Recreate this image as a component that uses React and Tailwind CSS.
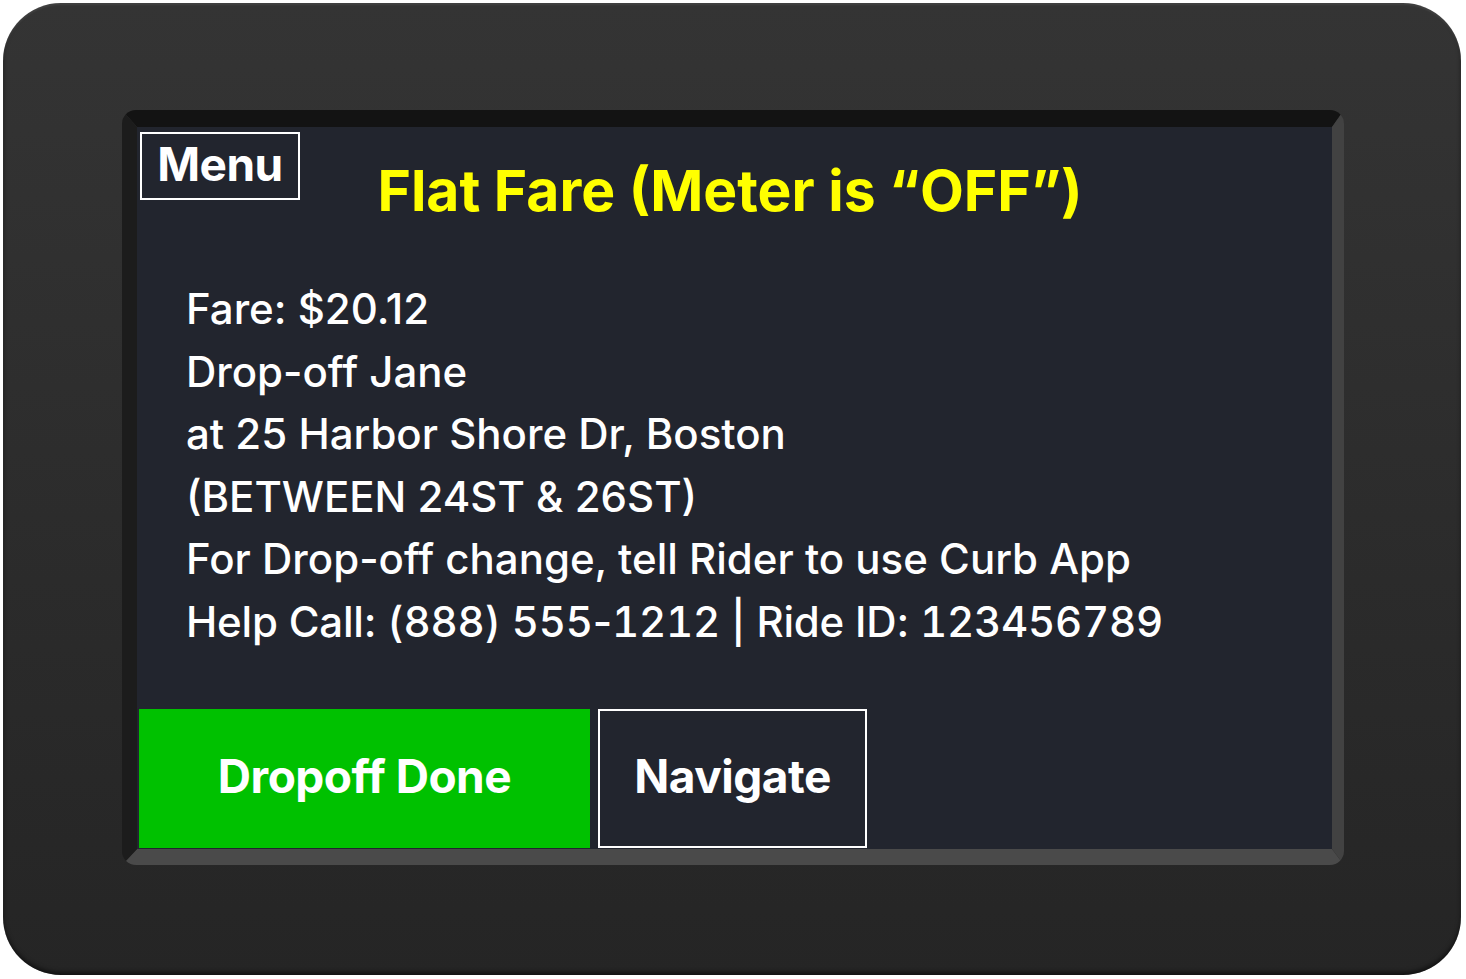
import React from 'react';

const lines = [
  'Fare: $20.12',
  'Drop-off Jane',
  'at 25 Harbor Shore Dr, Boston',
  '(BETWEEN 24ST & 26ST)',
  'For Drop-off change, tell Rider to use Curb App',
];

export default function App() {
  return (
    <div className="min-h-screen bg-white p-[3px]" style={{ fontFamily: 'Inter, "Noto Sans", sans-serif' }}>
      {/* Device frame */}
      <div className="w-[1458px] h-[972px] rounded-[58px] bg-gradient-to-b from-[#343434] to-[#252525] shadow-[inset_0_2px_2px_rgba(255,255,255,0.08),inset_0_-3px_4px_rgba(0,0,0,0.5)] pl-[119px] pt-[107px] pr-[117px] pb-[110px]">
        {/* Recessed bezel */}
        <div className="w-full h-full rounded-[14px] border-t-[17px] border-l-[15px] border-r-[12px] border-b-[16px] border-t-[#131313] border-l-[#1c1c1c] border-r-[#424242] border-b-[#4a4a4a]">
          {/* Screen */}
          <div className="w-full h-full bg-[#22252e] flex flex-col pl-[3px] pt-[5px] pr-[12px]">
            {/* Header */}
            <div className="h-[146px] grid grid-cols-[160px_1fr_160px] items-start">
              <button className="h-[68px] border-2 border-white text-white font-bold text-[46px] leading-none flex items-center justify-center pb-[4px] tracking-[-0.5px]">
                Menu
              </button>
              <h1 className="mt-[30px] text-center text-[#ffff00] font-bold text-[57px] leading-none whitespace-nowrap">
                Flat Fare (Meter is “OFF”)
              </h1>
            </div>

            {/* Ride details */}
            <div className="pl-[46px] text-white font-medium text-[42px] leading-[62.6px]">
              {lines.map((l) => (
                <div key={l} className="whitespace-nowrap">{l}</div>
              ))}
              <div className="whitespace-nowrap tracking-[-0.2px]">
                Help Call: <span className="tabular-nums">(888) 555</span>-<span className="tabular-nums">1212</span> | Ride ID: <span className="tabular-nums">123456789</span>
              </div>
            </div>

            {/* Action buttons */}
            <div className="mt-auto mb-[1px] -ml-[1px] flex gap-[8px]">
              <button className="w-[451px] h-[139px] bg-[#00c100] text-white font-bold text-[46px] tracking-[-0.5px] flex items-center justify-center pb-[4px]">
                Dropoff Done
              </button>
              <button className="w-[269px] h-[139px] border-2 border-white text-white font-bold text-[46px] tracking-[-0.5px] flex items-center justify-center pb-[4px]">
                Navigate
              </button>
            </div>
          </div>
        </div>
      </div>
    </div>
  );
}
